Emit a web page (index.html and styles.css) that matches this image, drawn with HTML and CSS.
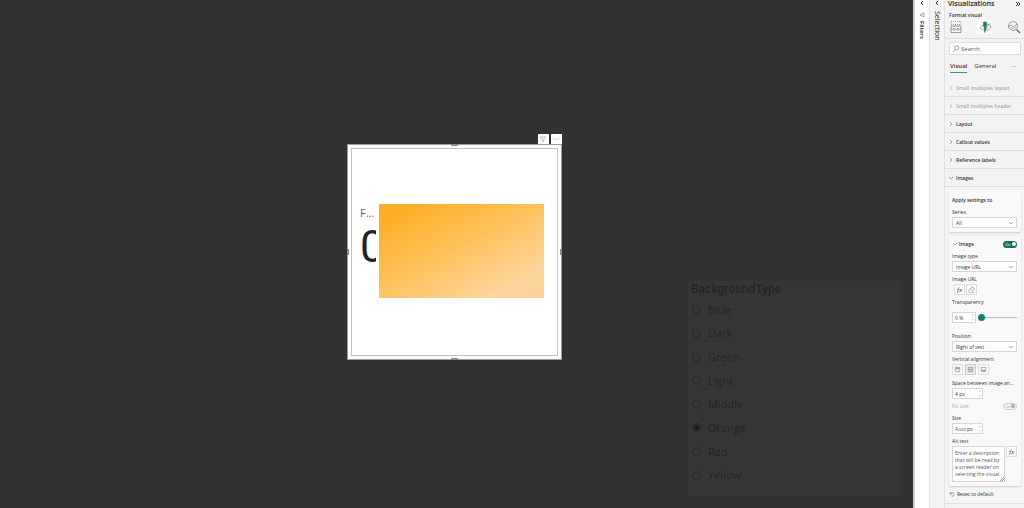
FILE: index.html
```html
<!DOCTYPE html>
<html lang="en">
<head>
<meta charset="utf-8">
<title>Report editor</title>
<link rel="stylesheet" href="styles.css">
</head>
<body>
<main class="canvas">
  <section class="visual">
    <div class="visual-tools">
      <button class="tool" aria-label="Filters"><svg viewBox="0 0 10 10"><path d="M2 3h6L5.700 5.500v2h-1.400v-2z"/></svg></button>
      <button class="tool" aria-label="More options"><svg viewBox="0 0 10 10"><path d="M2 5h1.500M4.300 5h1.500M6.600 5h1.500"/></svg></button>
    </div>
    <i class="handle top"></i><i class="handle bottom"></i><i class="handle left"></i><i class="handle right"></i>
    <div class="card-visual">
      <div class="callout"><span class="callout-label">F...</span><span class="callout-value">0</span></div>
      <div class="card-image"></div>
    </div>
  </section>
  <fieldset class="slicer">
    <legend class="slicer-title">BackgroundType</legend>
    <div class="options">
      <label><input type="radio" name="bg">Blue</label>
      <label><input type="radio" name="bg">Dark</label>
      <label><input type="radio" name="bg">Green</label>
      <label><input type="radio" name="bg">Light</label>
      <label><input type="radio" name="bg">Middle</label>
      <label><input type="radio" name="bg" checked>Orange</label>
      <label><input type="radio" name="bg">Red</label>
      <label><input type="radio" name="bg">Yellow</label>
    </div>
  </fieldset>
</main>
<aside class="rail filters">
  <button class="expand" aria-label="Expand filters"><svg viewBox="0 0 6 6"><path d="M4 1L2 3l2 2"/></svg></button>
  <svg class="funnel" viewBox="0 0 6 6"><path d="M1 3l4-2v4z"/></svg>
  <span class="rail-name">Filters</span>
</aside>
<aside class="rail selection">
  <button class="expand" aria-label="Expand selection"><svg viewBox="0 0 6 6"><path d="M4 1L2 3l2 2"/></svg></button>
  <span class="rail-name">Selection</span>
</aside>
<aside class="pane">
  <header class="pane-head">
    <h1>Visualizations</h1>
    <button class="expand" aria-label="Collapse"><svg viewBox="0 0 6 6"><path d="M1 1l2 2-2 2M3 1l2 2-2 2"/></svg></button>
  </header>
  <h2>Format visual</h2>
  <nav class="modes">
    <button aria-label="Build visual"><svg viewBox="0 0 14 14"><path class="dash" d="M2 1.500h10v3h-10z"/><path d="M2 6h10v6.500h-10zM2 9.200h10"/><path class="dash" d="M5 6v6M9 6v6"/></svg></button>
    <button class="active" aria-label="Format visual"><svg viewBox="0 0 14 14"><path d="M5 5L2 7.500l3 3M9 4.500l3.500.5v3L9 11"/><path class="brush" d="M5.500 2h3v4.500h-3zM6 7h2v3l-1.500 2.500z"/><path d="M11.500 3L8 9"/></svg></button>
    <button aria-label="Analytics"><svg viewBox="0 0 14 14"><circle cx="6" cy="6" r="4.500"/><path class="thick" d="M9.500 9.500l3.500 3.500"/><path d="M1 7l3-2 2 2L10 4M4 8.500V7M6 9.500V8M8 8.500V6.500"/></svg></button>
  </nav>
  <label class="search"><svg viewBox="0 0 8 8"><circle cx="4.800" cy="3" r="2.200"/><path d="M3.200 4.700L1 7"/></svg><input type="text" placeholder="Search" aria-label="Search"></label>
  <div class="tabs"><button class="active">Visual</button><button>General</button><button class="more" aria-label="More">···</button></div>
  <div class="sections">
    <button class="off"><svg viewBox="0 0 6 6"><path d="M2 1l2 2-2 2"/></svg>Small multiples layout</button>
    <button class="off"><svg viewBox="0 0 6 6"><path d="M2 1l2 2-2 2"/></svg>Small multiples header</button>
    <button><svg viewBox="0 0 6 6"><path d="M2 1l2 2-2 2"/></svg>Layout</button>
    <button><svg viewBox="0 0 6 6"><path d="M2 1l2 2-2 2"/></svg>Callout values</button>
    <button><svg viewBox="0 0 6 6"><path d="M2 1l2 2-2 2"/></svg>Reference labels</button>
    <button><svg viewBox="0 0 6 6"><path d="M1 2l2 2 2-2"/></svg>Images</button>
  </div>
  <div class="cards">
    <section class="card apply">
      <h3>Apply settings to</h3>
      <label class="gap4" for="series">Series</label>
      <div class="select"><select id="series"><option>All</option></select><svg viewBox="0 0 6 6"><path d="M1 2l2 2 2-2"/></svg></div>
    </section>
    <section class="card">
      <div class="card-head"><svg viewBox="0 0 6 6"><path d="M1 2l2 2 2-2"/></svg><h3>Image</h3>
        <label class="toggle"><input type="checkbox" checked aria-label="Image"><span>On</span></label></div>
      <label class="gap4" for="type">Image type</label>
      <div class="select"><select id="type"><option>Image URL</option></select><svg viewBox="0 0 6 6"><path d="M1 2l2 2 2-2"/></svg></div>
      <span class="gap3">Image URL</span>
      <div class="buttons"><button class="fx">fx</button><button aria-label="Clear"><svg viewBox="0 0 10 10"><path d="M2 6l4-4 2.500 2.500-4 4H3.500L2 7zM4 4l2.500 2.500M6 8.500h2"/></svg></button></div>
      <label class="gap3" for="trans">Transparency</label>
      <div class="slide-row"><div class="spin"><input type="text" id="trans" value="0 %"><svg viewBox="0 0 4 10"><path d="M1 3l1-1 1 1M1 7l1 1 1-1"/></svg></div><input type="range" value="0" aria-label="Transparency"></div>
      <label class="gap9" for="pos">Position</label>
      <div class="select"><select id="pos"><option>Right of text</option></select><svg viewBox="0 0 6 6"><path d="M1 2l2 2 2-2"/></svg></div>
      <span class="gap3">Vertical alignment</span>
      <div class="buttons align">
        <button aria-label="Top"><svg viewBox="0 0 10 10"><path d="M2.500 2.500h5v5h-5zM3.500 3.500h3v1h-3z"/></svg></button>
        <button class="pressed" aria-label="Middle"><svg viewBox="0 0 10 10"><path d="M2.500 2.500h5v5h-5zM3.500 4.500h3v1h-3z"/></svg></button>
        <button aria-label="Bottom"><svg viewBox="0 0 10 10"><path d="M2.500 2.500h5v5h-5zM3.500 5.500h3v1h-3z"/></svg></button>
      </div>
      <label class="gap4" for="space">Space between image an...</label>
      <div class="spin"><input type="text" id="space" value="4 px"><svg viewBox="0 0 4 10"><path d="M1 3l1-1 1 1M1 7l1 1 1-1"/></svg></div>
      <div class="fix"><span>Fix size</span><label class="toggle disabled"><input type="checkbox" disabled aria-label="Fix size"><span>On</span></label></div>
      <label class="gap4" for="size">Size</label>
      <div class="spin"><input class="auto" type="text" id="size" placeholder="Auto"><span class="unit">px</span><svg viewBox="0 0 4 10"><path d="M1 3l1-1 1 1M1 7l1 1 1-1"/></svg></div>
      <label class="gap3" for="alt">Alt text</label>
      <div class="alt-row"><textarea id="alt" placeholder="Enter a description that will be read by a screen reader on selecting the visual."></textarea><button class="fx">fx</button></div>
    </section>
    <button class="reset"><svg viewBox="0 0 6 6"><path d="M1 1v2h2M1.200 2.800C2 1 5 1 5 3.500 5 5 3.500 5.500 2.500 5"/></svg>Reset to default</button>
  </div>
</aside>
</body>
</html>
```
FILE: styles.css
```css
* { box-sizing: border-box; margin: 0; }
body { display: flex; height: 100vh; overflow: hidden; background: #323232; color: #333; font: 5px/8px "Open Sans", "Noto Sans", sans-serif; }
button, input, select, textarea { font: inherit; color: inherit; border: 0; padding: 0; background: none; border-radius: 0; outline: 0; min-width: 0; }
svg { display: block; flex: none; fill: none; stroke: #666; stroke-width: 0.6; }
.canvas { position: relative; flex: 1; background: #323232; }

.visual { position: absolute; left: 347px; top: 144px; width: 215px; height: 216px; padding: 3px; background: #fff; border: 1px solid #9a9a9a; }
.visual-tools { position: absolute; right: -1px; top: -11px; display: flex; gap: 2px; }
.tool { width: 11px; height: 10px; background: #fff; }
.tool svg { width: 10px; height: 10px; stroke: #999; }
.handle { position: absolute; background: #8a8a8a; }
.top, .bottom { left: 103px; width: 7px; height: 2px; }
.left, .right { top: 104px; width: 2px; height: 6px; }
.top { top: -1px; }
.bottom { bottom: -1px; }
.left { left: -1px; }
.right { right: -1px; }
.card-visual { display: flex; align-items: center; justify-content: space-between; height: 100%; padding: 0 13px 2px 8px; border: 1px solid #c4c4c4; }
.callout { width: 16px; display: flex; flex-direction: column; margin-bottom: 24px; }
.callout-label { font: 11px/16px "Open Sans", sans-serif; color: #666; }
.callout-value { overflow: hidden; font: 44px/52px Roboto, sans-serif; color: #222; }
.card-image { width: 165px; height: 94px; background: linear-gradient(152deg, #fbae23 8%, #ffbd4d 38%, #fdd59d 85%, #f8cf98); }

.slicer { position: absolute; left: 687px; top: 281px; width: 214px; height: 215px; padding: 0 4px 8px; border: 0; background: #353535; color: #252525; }
.slicer-title { float: left; width: 100%; padding: 0; font: 500 12px/16px Roboto, sans-serif; }
.options { clear: both; display: grid; grid-template-rows: repeat(8, 1fr); height: 190px; padding-top: 1px; font: 11px/16px "Open Sans", sans-serif; }
.options label { display: flex; align-items: center; gap: 7px; padding-left: 1px; }
.options input { appearance: none; width: 9px; height: 9px; border: 1px solid #292929; border-radius: 50%; }
.options input:checked { background: #1a1a1a; box-shadow: inset 0 0 0 1px #353535; }

.rail { display: flex; flex-direction: column; align-items: center; border-right: 1px solid #e3e3e3; }
.filters { width: 17px; background: #fff; border-left: 2px solid #ccc; }
.selection { width: 15px; background: #f3f3f3; }
.expand svg { width: 6px; height: 6px; stroke: #333; stroke-width: 1; }
.funnel { width: 6px; height: 6px; margin-top: 6px; }
.rail-name { writing-mode: vertical-rl; margin-top: 3px; font-size: 7px; line-height: 8px; color: #222; }
.filters .rail-name { font-weight: 600; font-size: 6px; }
.selection .rail-name { margin-top: 5px; font-weight: 500; }

.pane { width: 79px; background: #f3f3f3; }
.pane-head { display: flex; justify-content: space-between; padding: 0 3px; height: 8px; }
h1 { font-size: 7px; line-height: 7px; font-weight: 600; color: #222; }
h2 { padding: 3px 4px 1px; font-size: 5px; line-height: 8px; font-weight: 600; }
h3 { font-size: 5px; line-height: 8px; font-weight: 600; }
.modes { display: flex; justify-content: space-between; height: 19px; padding: 0 3px; border-bottom: 1px solid #ddd; }
.modes button { width: 15px; height: 14px; display: grid; place-items: center; }
.modes svg { width: 14px; height: 14px; }
.modes .active { background: #fff; }
.dash { stroke-dasharray: 1 1; }
.thick { stroke-width: 1.2; }
.brush { fill: #14806c; stroke: #14806c; }
.search { display: flex; align-items: center; gap: 1px; height: 13px; margin: 3px 3px 0 4px; padding: 0 2px; background: #fff; border: 1px solid #ddd; }
.search svg { width: 8px; height: 8px; }
.search input { width: 50px; font-size: 6px; }
::placeholder { color: #555; opacity: 1; }
.tabs { display: flex; gap: 7px; height: 18px; margin: 6px 8px 0 5px; font-size: 6px; }
.tabs button { height: 12px; padding-bottom: 1px; border-bottom: 1px solid transparent; }
.tabs .active { font-weight: 600; border-color: #2a9683; }
.tabs .more { margin-left: auto; }
.sections { display: flex; flex-direction: column; }
.sections button { display: flex; align-items: center; gap: 2px; height: 18px; padding: 0 3px; border-bottom: 1px solid #e0e0e0; font-weight: 600; }
.sections svg, .card-head svg { width: 6px; height: 6px; }
.sections .off { color: #aaa; }
.off svg { stroke: #aaa; }

.cards { display: flex; flex-direction: column; gap: 4px; padding: 3px 3px 5px 4px; border-bottom: 1px solid #e0e0e0; background: #f5f5f5; }
.card { display: flex; flex-direction: column; padding: 4px 4px 4px 3px; background: #f9f9f9; border-radius: 2px; box-shadow: 0 1px 2px #ccc; }
.apply { padding-top: 6px; }
.gap3 { margin-top: 3px; }
.gap4 { margin-top: 4px; }
.gap9 { margin-top: 9px; }
.card-head { display: flex; align-items: center; gap: 1px; height: 8px; }
.card-head .toggle, .fix .toggle { margin-left: auto; }
.select { display: grid; align-items: center; height: 11px; margin-top: 1px; background: #fff; border: 1px solid #d6d6d6; }
.select select { grid-area: 1 / 1; width: 100%; height: 9px; padding-left: 3px; appearance: none; }
.select svg { grid-area: 1 / 1; justify-self: end; width: 6px; height: 6px; margin-right: 2px; pointer-events: none; }
.buttons { display: flex; gap: 1px; margin: 1px 0 0 2px; }
.buttons button, .alt-row button { display: grid; place-items: center; width: 11px; height: 11px; background: #fff; border: 1px solid #ddd; }
.buttons svg { width: 9px; height: 9px; }
.align { gap: 2px; margin-left: 0; }
.buttons .pressed { background: #eee; border-color: #ccc; }
button.fx { font: italic 7px/8px "Liberation Serif", serif; }
.spin { display: flex; align-items: center; width: 31px; height: 11px; margin-top: 1px; padding-left: 2px; background: #fff; border: 1px solid #d6d6d6; }
.spin input { flex: 1; width: 18px; }
.spin .auto { flex: none; width: 12px; }
.spin .unit { flex: 1; }
.spin svg { width: 4px; height: 9px; stroke: #777; stroke-width: 0.5; }
.slide-row { display: flex; align-items: center; gap: 2px; margin-top: 6px; }
.slide-row .spin { width: 24px; margin: 0; }
input[type="range"] { appearance: none; flex: 1; height: 8px; background: linear-gradient(#bbb, #bbb) center / 100% 1px no-repeat; }
input[type="range"]::-webkit-slider-thumb { appearance: none; width: 7px; height: 7px; border-radius: 50%; background: #14806c; }
.toggle { display: flex; align-items: center; justify-content: space-between; width: 14px; height: 7px; padding: 0 1px 0 2px; border-radius: 4px; background: #14705f; color: #fff; font-size: 4px; line-height: 7px; }
.toggle input { appearance: none; order: 1; width: 4px; height: 4px; border-radius: 50%; background: #fff; }
.toggle.disabled { background: #f5f5f5; color: #aaa; border: 1px solid #ccc; padding: 0 1px; }
.toggle.disabled input { background: #aaa; }
.fix { display: flex; align-items: center; height: 8px; margin-top: 3px; color: #aaa; }
.alt-row { display: flex; align-items: flex-start; justify-content: space-between; margin-top: 1px; }
textarea { width: 53px; height: 36px; padding: 3px 2px; background: linear-gradient(135deg, transparent 50%, #999 50% 60%, transparent 60% 75%, #999 75% 85%, transparent 85%) right bottom / 4px 4px no-repeat #fff; border: 1px solid #d6d6d6; line-height: 7px; overflow: hidden; resize: none; }
.reset { display: flex; align-items: center; gap: 2px; height: 8px; }
.reset svg { width: 6px; height: 6px; }
```
